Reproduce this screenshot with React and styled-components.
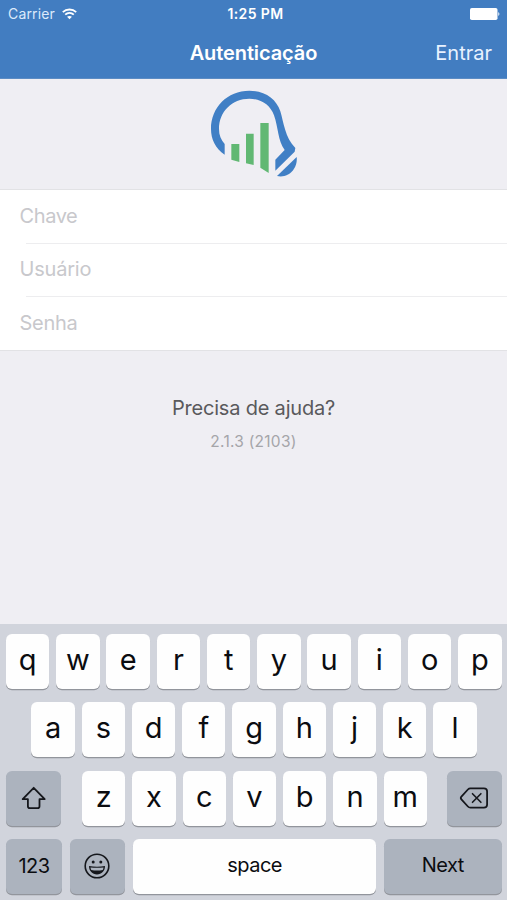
import React from "react";
import styled, { createGlobalStyle } from "styled-components";

const Global = createGlobalStyle`
  * { box-sizing: border-box; }
  body { margin: 0; font-family: Inter, "Liberation Sans", sans-serif; background: #efeef3; }
`;

const Screen = styled.main`
  width: 507px;
  height: 900px;
  display: flex;
  flex-direction: column;
  background: #efeef3;
  overflow: hidden;
`;

const Header = styled.header`
  height: 79px;
  background: #427dc1;
  border-bottom: 1px solid #5c8cc4;
  color: #fff;
`;

const StatusBar = styled.div`
  height: 27px;
  display: grid;
  grid-template-columns: 1fr auto 1fr;
  align-items: center;
  padding: 0 6px 0 8px;
`;

const Carrier = styled.span`
  display: flex;
  align-items: center;
  gap: 7px;
  font-size: 14px;
  line-height: 20px;
  letter-spacing: 0.15px;
  color: #dceafb;
`;

const Clock = styled.span`
  padding-left: 2px;
  font-size: 14px;
  font-weight: 600;
  line-height: 20px;
  letter-spacing: 0.4px;
`;

const BatteryIcon = styled.svg`
  justify-self: end;
`;

const NavBar = styled.div`
  height: 51px;
  display: grid;
  grid-template-columns: 1fr auto 1fr;
  align-items: center;
  padding: 0 15px;
`;

const Title = styled.h1`
  grid-column: 2;
  margin: 0;
  font-size: 20px;
  font-weight: 600;
  line-height: 28px;
  letter-spacing: -0.1px;
`;

const NavAction = styled.button`
  justify-self: end;
  border: 0;
  padding: 0;
  background: none;
  color: #e8f2ff;
  font: 400 20px/28px Inter, sans-serif;
`;

const LogoPanel = styled.div`
  height: 110px;
  display: flex;
  justify-content: center;
  padding-left: 3px;
`;

const Form = styled.form`
  height: 162px;
  background: #fff;
  border-top: 1px solid #e2e2e5;
  border-bottom: 1px solid #e2e2e5;
`;

const Field = styled.label`
  display: block;
  height: 53.5px;
  padding-left: 19.5px;
  background: linear-gradient(#ededef, #ededef) 26px 100% / 100% ${(p) => (p.$last ? "0" : "1px")} no-repeat;
`;

const Input = styled.input`
  display: block;
  width: 100%;
  height: 51px;
  border: 0;
  outline: 0;
  padding: 0;
  background: none;
  font: 400 20px/28px Inter, sans-serif;
  letter-spacing: ${(p) => p.$spacing}px;
  &::placeholder { color: #c8c8cc; opacity: 1; }
`;

const Help = styled.section`
  flex: 1;
  display: flex;
  flex-direction: column;
  align-items: center;
  padding-top: 43px;
`;

const HelpLink = styled.a`
  font-size: 20px;
  line-height: 28px;
  letter-spacing: -0.2px;
  color: #59595c;
`;

const Version = styled.span`
  margin-top: 9px;
  font-size: 15.5px;
  line-height: 22px;
  letter-spacing: 0.25px;
  color: #a5a5a9;
`;

const Keyboard = styled.section`
  height: 276px;
  padding: 9.5px 5px 0 6px;
  display: flex;
  flex-direction: column;
  gap: 13.5px;
  background: #d1d4dc;
`;

const KeyRow = styled.div`
  display: flex;
  justify-content: ${(p) => p.$justify || "flex-start"};
  gap: ${(p) => p.$gap || 6.85}px;
  padding: 0 ${(p) => p.$inset || 0}px;
`;

const LetterGroup = styled.div`
  display: flex;
  gap: 6.85px;
  padding-left: 1px;
`;

const KeyCap = styled.button`
  width: ${(p) => p.$width || 43.4}px;
  height: 55px;
  flex: none;
  display: flex;
  align-items: center;
  justify-content: center;
  border: 0;
  border-radius: 6px;
  background: ${(p) => (p.$dark ? "#acb3be" : "#fefefe")};
  box-shadow: 0 1.3px 0 #92959c;
  color: #0b0c10;
`;

const LetterKey = styled(KeyCap)`
  padding: 0 0 3px;
  font: 400 29px/34px Inter, sans-serif;
`;

const LabelKey = styled(KeyCap)`
  padding: 0 0 ${(p) => p.$lift || 1}px;
  font: 400 20px/34px Inter, sans-serif;
  letter-spacing: -0.5px;
`;

const WifiIcon = () => (
  <svg width="15" height="12" viewBox="0 0 15 12" fill="none" stroke="#fff">
    <path d="M.8 4.2C4.5.6 10.5.6 14.2 4.2M3.2 6.7c2.5-2.3 6.1-2.3 8.6 0" strokeWidth="1.8" />
    <path d="M5.1 8.8c1.3-1.2 3.5-1.2 4.8 0L7.5 11.3z" fill="#fff" stroke="none" />
  </svg>
);

const Logo = () => (
  <svg width="110" height="110" viewBox="0 -15 330 330">
    <path fill="#407fc5" d="M74 212C46 193 33 166 33 135C33 70 82 20 148 20C194 20 229 44 241 82C251 115 255 161 286 192L284 203L226 260V227L254 198C233 170 235 130 222 94C211 63 183 44 148 44C96 44 57 83 57 135C57 154 63 168 74 180Z" />
    <path fill="#407fc5" d="M290 219C294 253 266 284 231 276Z" />
    <path fill="#61b873" d="M94 180h24v54l-24-7zM138 149h23v94l-23-5zM181 117h25v150l-25-16z" />
  </svg>
);

const ShiftIcon = () => (
  <svg width="26" height="24" viewBox="0 0 26 24" fill="none" stroke="#15171c" strokeWidth="1.8" strokeLinejoin="round">
    <path d="M12.7 1.8 23.7 13.2h-5.2v7.1q0 1.9-1.9 1.9H8.8q-1.9 0-1.9-1.9v-7.1H1.7z" />
  </svg>
);

const DeleteIcon = () => (
  <svg width="30" height="22" viewBox="0 0 30 22" fill="none" stroke="#15171c" strokeWidth="1.8" strokeLinejoin="round">
    <path d="M11.4 1.3h13.5q3.2 0 3.2 3.2v13q0 3.2-3.2 3.2H11.4q-1.4 0-2.5-1.2L2.4 12.3q-1.2-1.3 0-2.6l6.5-7.2q1.1-1.2 2.5-1.2z" />
    <path d="m13.5 6.7 8.4 8.6m0-8.6-8.4 8.6" strokeWidth="1.6" strokeLinecap="round" />
  </svg>
);

const EmojiIcon = () => (
  <svg width="26" height="26" viewBox="0 0 26 26">
    <circle cx="13" cy="13" r="11.8" fill="none" stroke="#15171c" strokeWidth="1.6" />
    <circle cx="9.2" cy="9.1" r="1.5" fill="#15171c" />
    <circle cx="16.8" cy="9.1" r="1.5" fill="#15171c" />
    <path d="M5 13c5 .9 11 .9 16 0 0 5-3.4 8.4-8 8.4S5 18 5 13z" fill="#15171c" />
    <path d="M6.5 14.4c4.2.6 8.8.6 13 0-.1 1-.4 1.8-.8 2.6-3.7.8-7.7.8-11.4 0-.4-.8-.7-1.6-.8-2.6z" fill="#acb3be" />
  </svg>
);

const FIELDS = [
  { name: "Chave", spacing: -0.4 },
  { name: "Usuário", spacing: -0.2 },
  { name: "Senha", spacing: -0.3 },
];

const letters = (text) => [...text].map((c) => <LetterKey type="button" key={c}>{c}</LetterKey>);

export default function App() {
  return (
    <Screen>
      <Global />
      <Header>
        <StatusBar>
          <Carrier>Carrier <WifiIcon /></Carrier>
          <Clock>1:25 PM</Clock>
          <BatteryIcon width="31" height="12" viewBox="0 0 31 12" fill="#fff">
            <rect x="0" y="0" width="27.5" height="12" rx="1.8" />
            <path d="M28.3 4q2.2 2 0 4z" />
          </BatteryIcon>
        </StatusBar>
        <NavBar>
          <Title>Autenticação</Title>
          <NavAction>Entrar</NavAction>
        </NavBar>
      </Header>
      <LogoPanel><Logo /></LogoPanel>
      <Form>
        {FIELDS.map((f, i) => (
          <Field key={f.name} $last={i === FIELDS.length - 1}>
            <Input placeholder={f.name} $spacing={f.spacing} />
          </Field>
        ))}
      </Form>
      <Help>
        <HelpLink>Precisa de ajuda?</HelpLink>
        <Version>2.1.3 (2103)</Version>
      </Help>
      <Keyboard>
        <KeyRow>{letters("qwertyuiop")}</KeyRow>
        <KeyRow $inset={25.4}>{letters("asdfghjkl")}</KeyRow>
        <KeyRow $justify="space-between">
          <LabelKey type="button" $dark $width={55} aria-label="Shift"><ShiftIcon /></LabelKey>
          <LetterGroup>{letters("zxcvbnm")}</LetterGroup>
          <LabelKey type="button" $dark $width={55} aria-label="Delete"><DeleteIcon /></LabelKey>
        </KeyRow>
        <KeyRow $gap={7.6}>
          <LabelKey type="button" $dark $width={56}>123</LabelKey>
          <LabelKey type="button" $dark $width={55.7} aria-label="Emoji"><EmojiIcon /></LabelKey>
          <LabelKey type="button" $lift={4} $width={243.4}>space</LabelKey>
          <LabelKey type="button" $dark $lift={4} $width={118}>Next</LabelKey>
        </KeyRow>
      </Keyboard>
    </Screen>
  );
}
